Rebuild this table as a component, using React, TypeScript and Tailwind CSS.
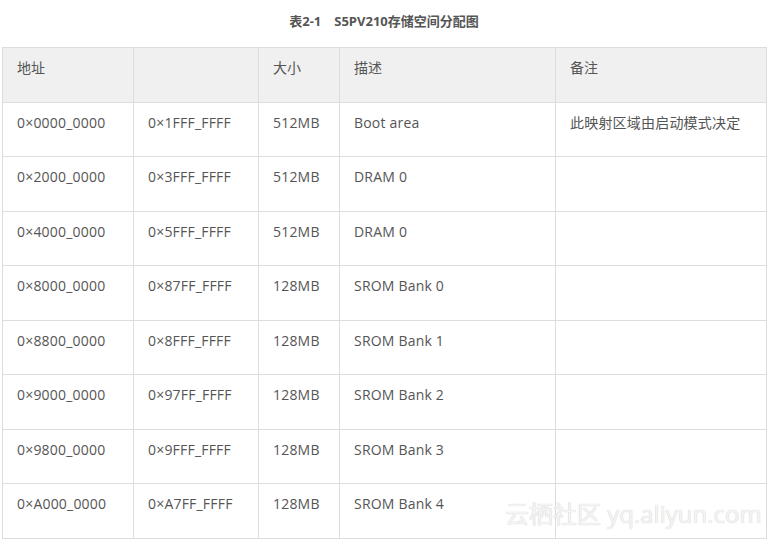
import React from "react";

const rows = [
  ["0×0000_0000", "0×1FFF_FFFF", "512MB", "Boot area", "此映射区域由启动模式决定"],
  ["0×2000_0000", "0×3FFF_FFFF", "512MB", "DRAM 0", ""],
  ["0×4000_0000", "0×5FFF_FFFF", "512MB", "DRAM 0", ""],
  ["0×8000_0000", "0×87FF_FFFF", "128MB", "SROM Bank 0", ""],
  ["0×8800_0000", "0×8FFF_FFFF", "128MB", "SROM Bank 1", ""],
  ["0×9000_0000", "0×97FF_FFFF", "128MB", "SROM Bank 2", ""],
  ["0×9800_0000", "0×9FFF_FFFF", "128MB", "SROM Bank 3", ""],
  ["0×A000_0000", "0×A7FF_FFFF", "128MB", "SROM Bank 4", ""],
];

const widths = ["w-[131px]", "w-[125px]", "w-[81px]", "w-[216px]", "w-[211px]"];

export default function App() {
  return (
    <div
      className="relative w-[768px] h-[539px] bg-white overflow-hidden text-[#555]"
      style={{ fontFamily: '"Open Sans", "Noto Sans CJK SC", sans-serif' }}
    >
      <div className="pt-[12px] h-[47px] text-center text-[13px] font-bold text-[#555] leading-[18px]">
        表2-1　S5PV210存储空间分配图
      </div>
      <table className="ml-[2px] w-[764px] border-collapse table-fixed text-[14px] leading-[20px]">
        <colgroup>
          {widths.map((w, i) => (
            <col key={i} className={w} />
          ))}
        </colgroup>
        <thead>
          <tr className="h-[55px] bg-[#f0f0f0]">
            {["地址", "", "大小", "描述", "备注"].map((h, i) => (
              <th
                key={i}
                className="border border-[#dddddd] px-[14px] pt-[10px] align-top text-left font-normal"
              >
                {h}
              </th>
            ))}
          </tr>
        </thead>
        <tbody>
          {rows.map((r, ri) => (
            <tr key={ri} className={ri % 2 === 0 ? "h-[54px]" : "h-[55px]"}>
              {r.map((c, ci) => (
                <td
                  key={ci}
                  className="border border-[#dddddd] px-[14px] pt-[10px] align-top tracking-[0.2px]"
                >
                  {c}
                </td>
              ))}
            </tr>
          ))}
        </tbody>
      </table>
      <div
        className="absolute left-[505px] top-[498px] whitespace-nowrap text-[24px] leading-[32px] text-[#f4f4f4]"
        style={{ textShadow: "0 0 1px rgba(0,0,0,0.25)" }}
      >
        云栖社区 yq.aliyun.com
      </div>
    </div>
  );
}
